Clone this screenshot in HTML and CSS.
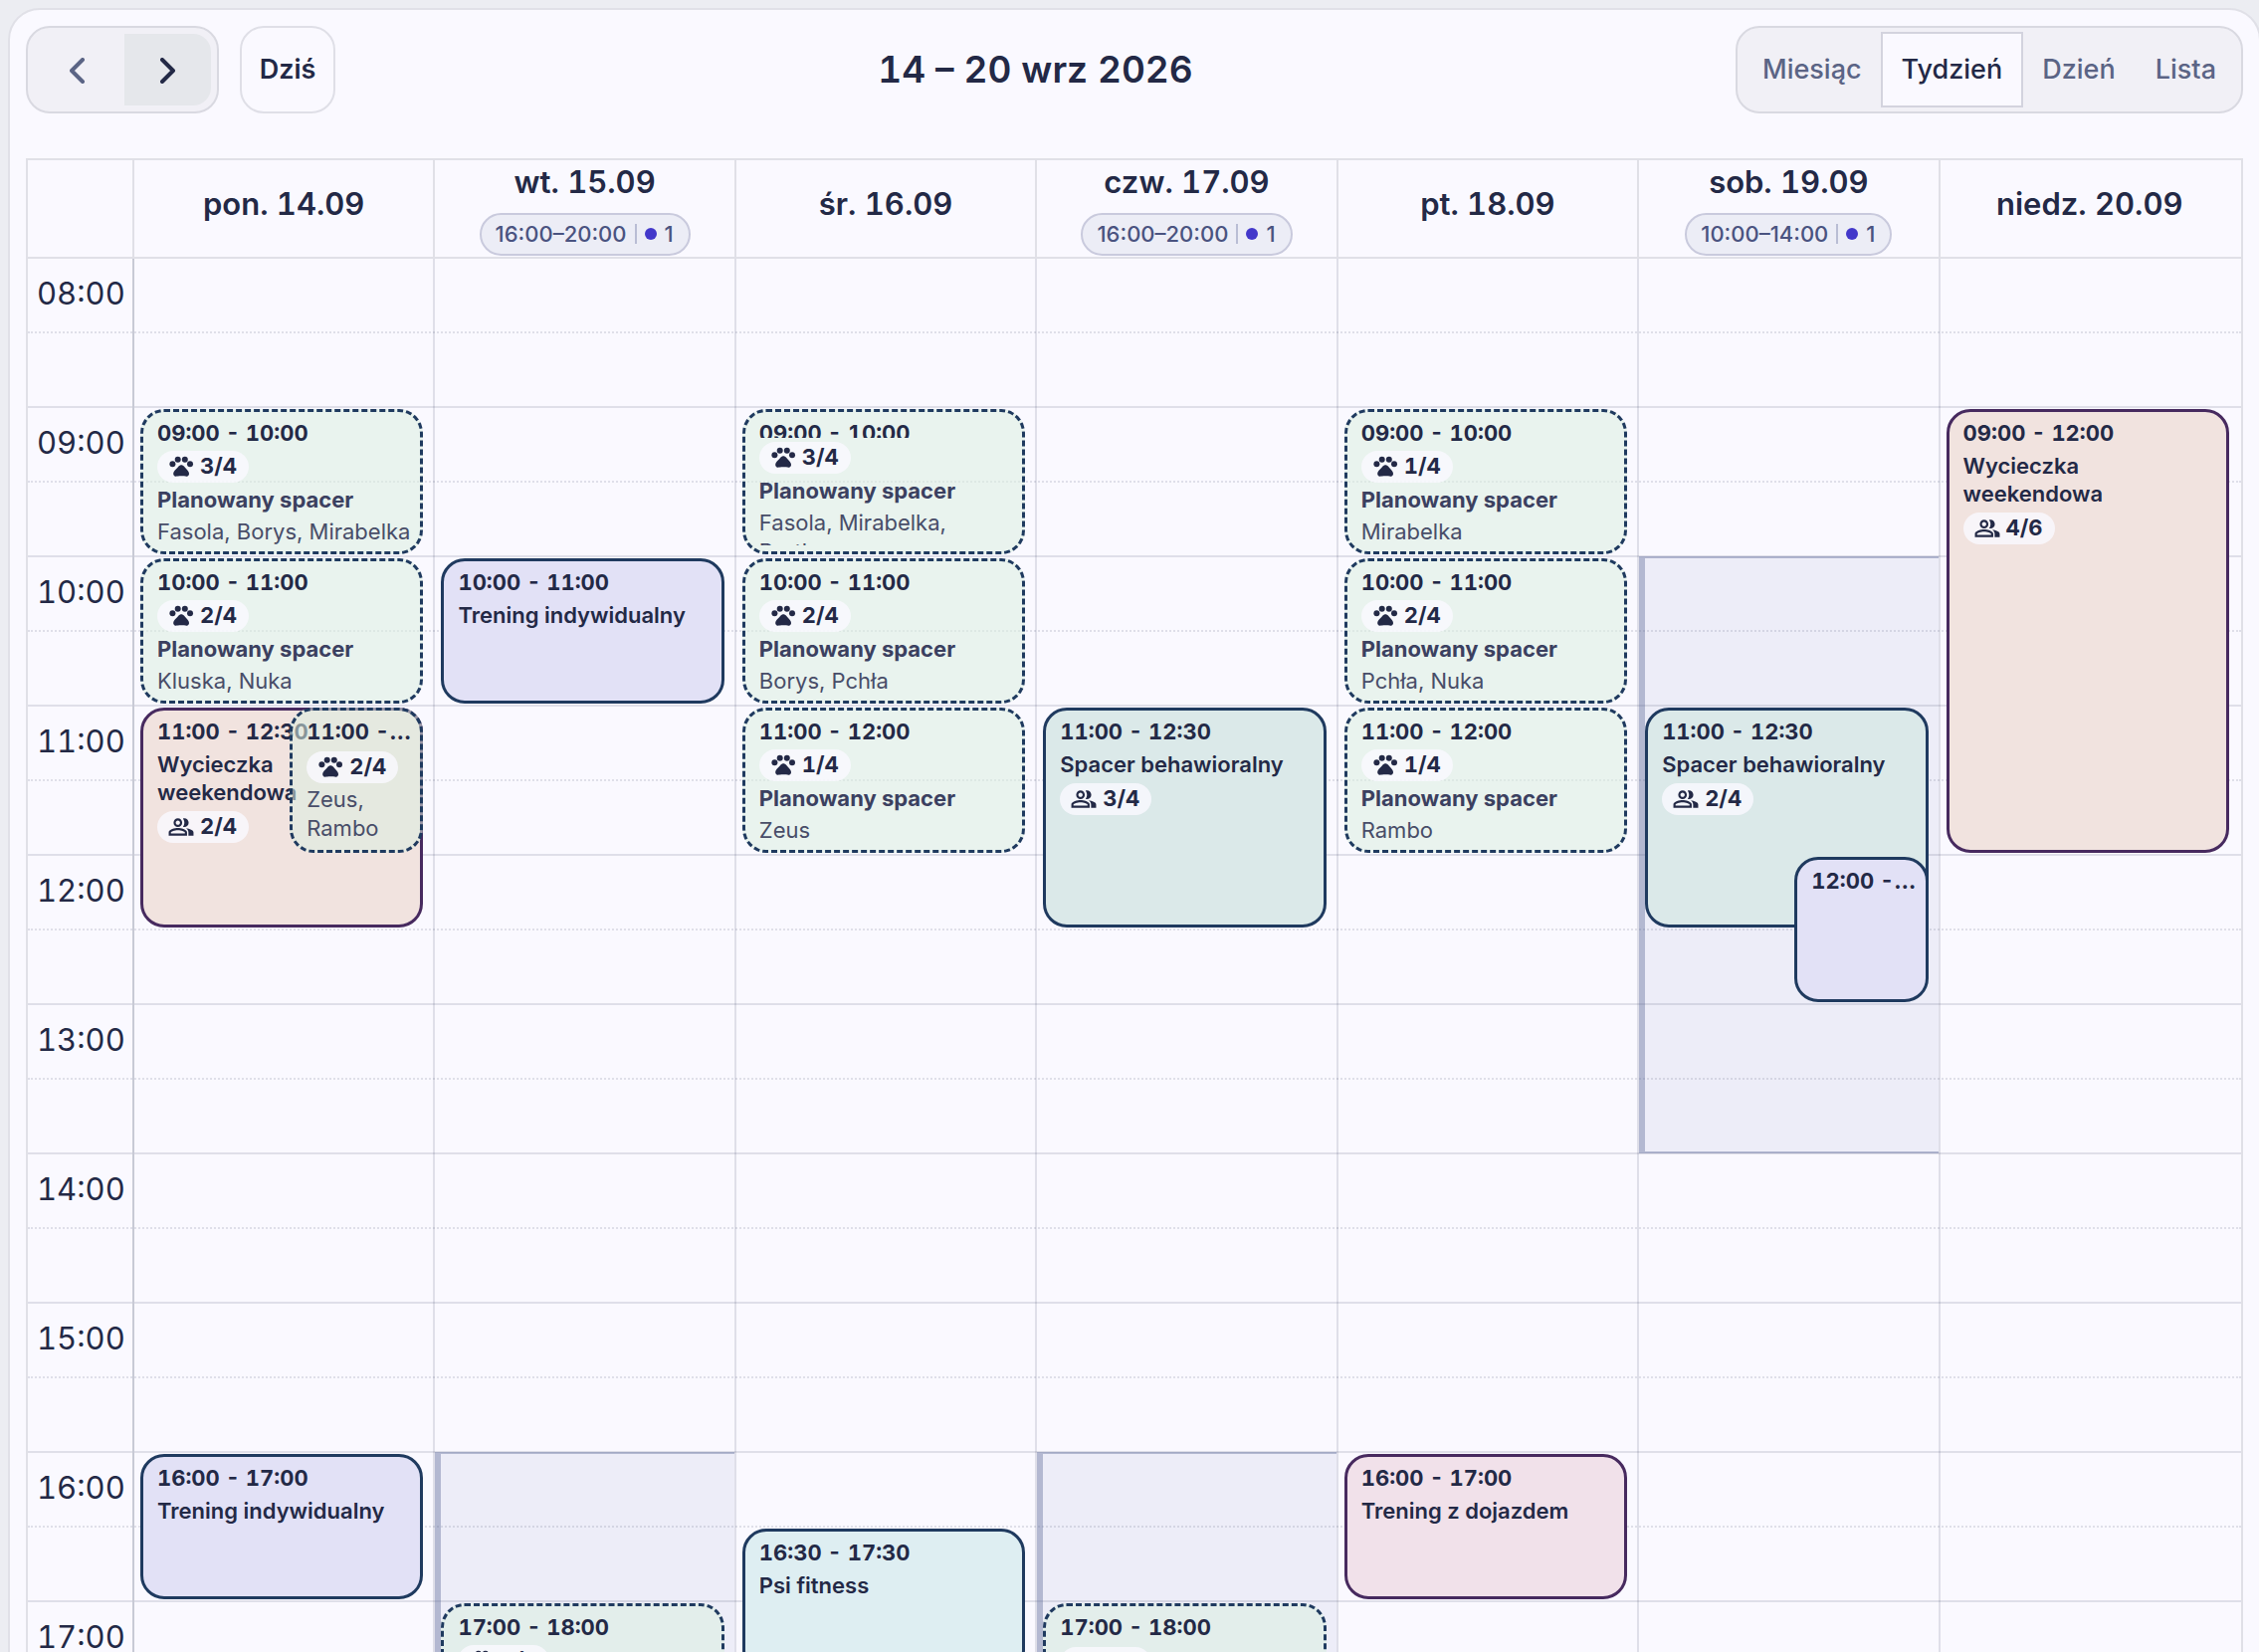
FILE: index.html
```html
<!DOCTYPE html>
<html lang="pl">
<head>
<meta charset="utf-8">
<title>Kalendarz</title>
<meta name="viewport" content="width=device-width, initial-scale=1">
<link rel="stylesheet" href="styles.css">
</head>
<body>
<svg class="sprite" aria-hidden="true">
  <symbol id="paw" viewBox="-1 -1 26 26"><circle cx="3.400" cy="9.300" r="3"/><circle cx="8.700" cy="4.700" r="3"/><circle cx="15.800" cy="4.700" r="3"/><circle cx="21" cy="9.300" r="3"/><path d="M17.600 14.600c-.9-1-1.600-1.900-2.500-2.900-.5-.5-1.100-1.100-1.800-1.300-.7-.2-1.500-.2-2.200 0-.7.2-1.300.8-1.800 1.300-.9 1-1.600 1.900-2.500 2.900-1.300 1.300-2.900 2.800-2.600 4.800.3 1 1 2 2.300 2.300.7.1 3-.4 5.500-.4h.2c2.500 0 4.800.6 5.500.4 1.300-.3 2-1.300 2.300-2.300.3-2-1.300-3.500-2.600-4.800z"/></symbol>
  <symbol id="people" viewBox="0 0 24 24"><path d="M16.500 13.100c1.400 1 2.300 2.200 2.300 3.900v3h4.700v-3c0-2.200-3.600-3.500-7-3.900z"/><path d="M15 12c2.200 0 4-1.800 4-4s-1.800-4-4-4c-.5 0-.9.100-1.300.2C14.500 5.300 15 6.600 15 8s-.5 2.700-1.300 3.800c.4.100.8.200 1.300.2z"/><path d="M9 12c2.200 0 4-1.800 4-4s-1.800-4-4-4-4 1.800-4 4 1.800 4 4 4zm0-6c1.100 0 2 .9 2 2s-.9 2-2 2-2-.9-2-2 .9-2 2-2zM9 13c-2.700 0-8.500 1.300-8.500 4v3h17v-3c0-2.700-5.800-4-8.500-4zm6.500 5h-13v-1c.2-.7 3.300-2 6.500-2s6.300 1.300 6.500 2v1z"/></symbol>
</svg>
<main class="card">
  <header class="toolbar">
    <div class="toolbar-side">
      <div class="group">
        <button class="nav" type="button" aria-label="Poprzedni tydzień"><svg viewBox="0 0 16 26" aria-hidden="true"><path d="M13 2 2 13l11 11"/></svg></button>
        <button class="nav nav-next" type="button" aria-label="Następny tydzień"><svg viewBox="0 0 16 26" aria-hidden="true"><path d="m2 2 11 11L2 24"/></svg></button>
      </div>
      <button class="today" type="button">Dziś</button>
    </div>
    <h1 class="title">14 – 20 wrz 2026</h1>
    <div class="group">
      <button class="view" type="button">Miesiąc</button>
      <button class="view view-active" type="button">Tydzień</button>
      <button class="view" type="button">Dzień</button>
      <button class="view" type="button">Lista</button>
    </div>
  </header>

  <section class="week">
    <div class="head">
      <div class="corner"></div>
      <div class="day-head"><h2>pon. 14.09</h2></div>
      <div class="day-head"><h2>wt. 15.09</h2><span class="hours">16:00–20:00<i class="bar"></i><i class="dot"></i><span>1</span></span></div>
      <div class="day-head"><h2>śr. 16.09</h2></div>
      <div class="day-head"><h2>czw. 17.09</h2><span class="hours">16:00–20:00<i class="bar"></i><i class="dot"></i><span>1</span></span></div>
      <div class="day-head"><h2>pt. 18.09</h2></div>
      <div class="day-head"><h2>sob. 19.09</h2><span class="hours">10:00–14:00<i class="bar"></i><i class="dot"></i><span>1</span></span></div>
      <div class="day-head"><h2>niedz. 20.09</h2></div>
    </div>

    <div class="body">
      <ol class="slots">
        <li>08:00</li>
        <li>09:00</li>
        <li>10:00</li>
        <li>11:00</li>
        <li>12:00</li>
        <li>13:00</li>
        <li>14:00</li>
        <li>15:00</li>
        <li>16:00</li>
        <li>17:00</li>
      </ol>
      <div class="days">
        <div class="day">
          <a href="#" class="event planned" style="--from:9;--to:10"><time>09:00 - 10:00</time><span class="count"><svg><use href="#paw"/></svg>3/4</span><strong>Planowany spacer</strong><span class="names">Fasola, Borys, Mirabelka</span></a>
          <a href="#" class="event planned" style="--from:10;--to:11"><time>10:00 - 11:00</time><span class="count"><svg><use href="#paw"/></svg>2/4</span><strong>Planowany spacer</strong><span class="names">Kluska, Nuka</span></a>
          <a href="#" class="event trip" style="--from:11;--to:12.5"><time>11:00 - 12:30</time><b>Wycieczka<br>weekendowa</b><span class="count"><svg><use href="#people"/></svg>2/4</span></a>
          <a href="#" class="event planned untitled half" style="--from:11;--to:12"><time>11:00 - 12:00</time><span class="count"><svg><use href="#paw"/></svg>2/4</span><span class="names">Zeus,<br>Rambo</span></a>
          <a href="#" class="event training" style="--from:16;--to:17"><time>16:00 - 17:00</time><b>Trening indywidualny</b></a>
        </div>
        <div class="day">
          <div class="open" style="--from:16;--to:18"></div>
          <a href="#" class="event training" style="--from:10;--to:11"><time>10:00 - 11:00</time><b>Trening indywidualny</b></a>
          <a href="#" class="event planned" style="--from:17;--to:18"><time>17:00 - 18:00</time><span class="count"><svg><use href="#paw"/></svg>2/4</span></a>
        </div>
        <div class="day">
          <a href="#" class="event planned tight" style="--from:9;--to:10"><time>09:00 - 10:00</time><span class="count"><svg><use href="#paw"/></svg>3/4</span><strong>Planowany spacer</strong><span class="names">Fasola, Mirabelka, Portka</span></a>
          <a href="#" class="event planned" style="--from:10;--to:11"><time>10:00 - 11:00</time><span class="count"><svg><use href="#paw"/></svg>2/4</span><strong>Planowany spacer</strong><span class="names">Borys, Pchła</span></a>
          <a href="#" class="event planned" style="--from:11;--to:12"><time>11:00 - 12:00</time><span class="count"><svg><use href="#paw"/></svg>1/4</span><strong>Planowany spacer</strong><span class="names">Zeus</span></a>
          <a href="#" class="event fitness" style="--from:16.5;--to:17.5"><time>16:30 - 17:30</time><b>Psi fitness</b></a>
        </div>
        <div class="day">
          <div class="open" style="--from:16;--to:18"></div>
          <a href="#" class="event walk" style="--from:11;--to:12.5"><time>11:00 - 12:30</time><b>Spacer behawioralny</b><span class="count"><svg><use href="#people"/></svg>3/4</span></a>
          <a href="#" class="event planned untitled" style="--from:17;--to:18"><time>17:00 - 18:00</time><span class="count"><svg><use href="#paw"/></svg>1/4</span></a>
        </div>
        <div class="day">
          <a href="#" class="event planned" style="--from:9;--to:10"><time>09:00 - 10:00</time><span class="count"><svg><use href="#paw"/></svg>1/4</span><strong>Planowany spacer</strong><span class="names">Mirabelka</span></a>
          <a href="#" class="event planned" style="--from:10;--to:11"><time>10:00 - 11:00</time><span class="count"><svg><use href="#paw"/></svg>2/4</span><strong>Planowany spacer</strong><span class="names">Pchła, Nuka</span></a>
          <a href="#" class="event planned" style="--from:11;--to:12"><time>11:00 - 12:00</time><span class="count"><svg><use href="#paw"/></svg>1/4</span><strong>Planowany spacer</strong><span class="names">Rambo</span></a>
          <a href="#" class="event travel" style="--from:16;--to:17"><time>16:00 - 17:00</time><b>Trening z dojazdem</b></a>
        </div>
        <div class="day">
          <div class="open" style="--from:10;--to:14"></div>
          <a href="#" class="event walk" style="--from:11;--to:12.5"><time>11:00 - 12:30</time><b>Spacer behawioralny</b><span class="count"><svg><use href="#people"/></svg>2/4</span></a>
          <a href="#" class="event training half" style="--from:12;--to:13"><time>12:00 - 13:00</time></a>
        </div>
        <div class="day">
          <a href="#" class="event trip" style="--from:9;--to:12"><time>09:00 - 12:00</time><b>Wycieczka<br>weekendowa</b><span class="count"><svg><use href="#people"/></svg>4/6</span></a>
        </div>
      </div>
    </div>
  </section>
</main>
</body>
</html>
```

FILE: styles.css
```css
* { box-sizing: border-box; }

:root {
  --ink: #232946;
  --muted: #5b6485;
  --line: rgba(35, 41, 70, .12);
  --page: #faf9ff;
  --hour: 150px;
  --axis: 105px;
}

body {
  margin: 0;
  height: 100vh;
  overflow: hidden;
  background: #ecedf2;
  color: var(--ink);
  font-family: Inter, "Noto Sans", sans-serif;
  font-size: 22px;
}

h1, h2 { margin: 0; font-weight: 600; }

button { font: inherit; cursor: pointer; }

.sprite { position: absolute; width: 0; height: 0; }

.card {
  margin: 8px -2px 0 8px;
  padding: 16px;
  border: 2px solid #e0e0e7;
  border-radius: 32px;
  background: var(--page);
}

/* Toolbar */
.toolbar {
  display: flex;
  align-items: center;
  justify-content: space-between;
  margin-bottom: 45px;
}

.toolbar-side { display: flex; gap: 21px; }

.group {
  display: flex;
  height: 88px;
  padding: 4px;
  border: 2px solid #d9d9e1;
  border-radius: 24px;
  background: #f1f0f6;
}

.nav {
  display: grid;
  place-items: center;
  width: 91px;
  padding: 2px 0 0;
  border: 2px solid transparent;
  border-radius: 20px 0 0 20px;
  background: transparent;
  background-clip: padding-box;
  color: var(--muted);
}

.nav-next {
  border-radius: 0 20px 20px 0;
  background-color: #e5e7eb;
  color: var(--ink);
}

.nav svg {
  width: 16px;
  height: 26px;
  fill: none;
  stroke: currentColor;
  stroke-width: 4;
  stroke-linecap: round;
  stroke-linejoin: round;
}

.today {
  width: 96px;
  height: 88px;
  padding: 0 0 2px;
  border: 2px solid #dfdfe7;
  border-radius: 24px;
  background: var(--page);
  color: var(--ink);
  font-size: 27px;
  font-weight: 600;
}

.title {
  font-size: 37px;
  line-height: 44px;
  font-variant-numeric: tabular-nums;
}

.view {
  margin-left: -2px;
  padding: 0 19px 2px;
  border: 2px solid transparent;
  background: transparent;
  color: var(--muted);
  font-size: 27px;
  font-weight: 500;
}

.view:first-child { margin-left: 0; }

.view-active {
  border-color: #d3d3de;
  background: var(--page);
  color: var(--ink);
}

/* Week grid */
.week { border: 2px solid #e0e0e7; }

.head {
  display: grid;
  grid-template-columns: var(--axis) repeat(7, minmax(0, 1fr));
  height: 99px;
  padding-right: 2px;
  border-bottom: 2px solid #e0e0e7;
}

.day-head {
  display: flex;
  flex-direction: column;
  align-items: center;
  justify-content: center;
  gap: 12px;
  border-left: 2px solid #e0e0e7;
}

.day-head h2 {
  font-size: 31px;
  line-height: 38px;
  padding-bottom: 10px;
  font-variant-numeric: tabular-nums;
}

.day-head:has(.hours) { justify-content: flex-end; padding-bottom: 1px; }
.day-head:has(.hours) h2 { padding: 0; }

.hours {
  display: flex;
  align-items: center;
  gap: 8px;
  height: 43px;
  padding: 0 15px 2px 14px;
  border: 2px solid #c9cadd;
  border-radius: 22px;
  background: #ecedf6;
  color: #4a5380;
  font-weight: 500;
}

.bar { width: 2px; height: 20px; background: #b9bdd4; }
.dot { width: 12px; height: 12px; border-radius: 50%; background: #4338ca; }

.body { position: relative; }

.slots {
  margin: 0;
  padding: 0;
  list-style: none;
  font-size: 31px;
  line-height: 36px;
  font-variant-numeric: tabular-nums;
}

.slots li {
  position: relative;
  height: var(--hour);
  padding: 17px 0 0 9px;
  border-bottom: 2px solid var(--line);
}

.slots li::after {
  content: "";
  position: absolute;
  inset: 73px 0 auto;
  border-top: 2px dotted var(--line);
}

/* Day columns lie over the hour rows */
.days {
  position: absolute;
  inset: 0 2px 0 var(--axis);
  display: grid;
  grid-template-columns: repeat(7, minmax(0, 1fr));
}

.day { position: relative; border-left: 2px solid var(--line); }
.day:first-child { border-color: #c8cad5; }

.open,
.event {
  position: absolute;
  top: calc((var(--from) - 8) * var(--hour) + 1px);
  height: calc((var(--to) - var(--from)) * var(--hour) - 4px);
}

.open {
  top: calc((var(--from) - 8) * var(--hour) - 1px);
  left: 0;
  right: 0;
  height: calc((var(--to) - var(--from)) * var(--hour));
  border: 2px solid rgba(80, 95, 145, .42);
  border-width: 2px 0 2px 6px;
  background: rgba(90, 100, 160, .08);
  background-clip: padding-box;
}

.event {
  display: flex;
  flex-direction: column;
  align-items: flex-start;
  gap: 4px;
  left: 6px;
  right: 10px;
  padding: 7px 6px 7px 14px;
  overflow: hidden;
  border: 3px solid #1f3a5f;
  border-radius: 24px;
  color: var(--ink);
  line-height: 28px;
  text-decoration: none;
}

.event > * { flex: none; }

.half { left: calc(50% + 6px); }

.event time {
  width: 100%;
  overflow: hidden;
  font-weight: 700;
  font-variant-numeric: tabular-nums;
  text-overflow: ellipsis;
  white-space: nowrap;
}

.event b { margin: 1px 0; font-weight: 600; }
.event strong { margin-top: -1px; color: #3b4060; font-weight: 700; }
.event .names { color: #484d68; line-height: 29px; }

.tight { padding-bottom: 6px; }
.tight time { height: 19px; }
.tight .names { flex: 1; min-height: 0; overflow: hidden; }

.count {
  display: flex;
  align-items: center;
  gap: 6px;
  height: 32px;
  padding: 0 12px 2px 11px;
  border-radius: 16px;
  background: rgba(250, 249, 255, .8);
  font-weight: 700;
  font-variant-numeric: tabular-nums;
}

.untitled .count { margin: 2px 0 -2px; }

.count svg { width: 26px; height: 26px; margin-top: 2px; fill: currentColor; }

.planned { border-style: dashed; background: rgba(219, 238, 224, .55); }
.training { background: #e2e1f6; }
.walk { background: #dbe9e9; }
.trip { border-color: #472a5f; background: #f1e3df; }
.travel { border-color: #472a5f; background: #f1e1ea; }
.fitness { background: #deeef2; }
```
